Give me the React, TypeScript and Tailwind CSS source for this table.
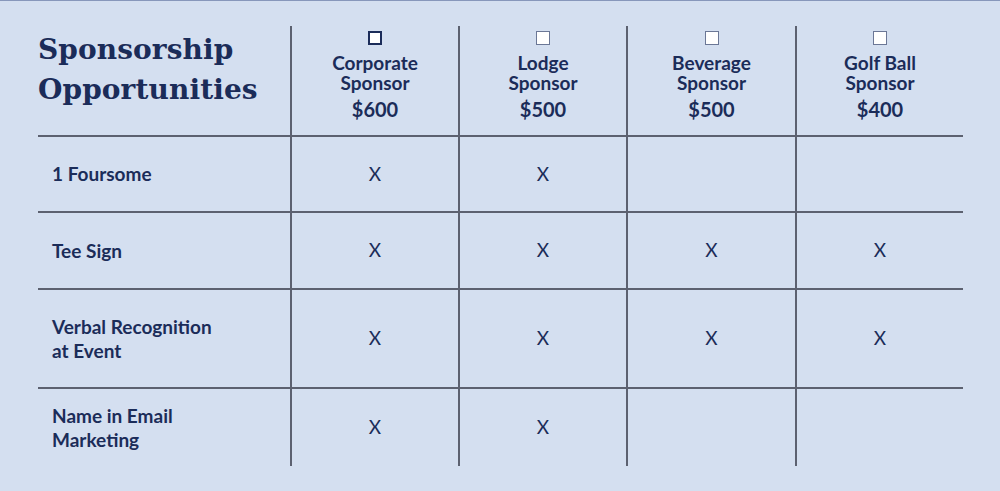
import React from "react";

type Plan = { name: string[]; price: string; checked?: boolean };

const plans: Plan[] = [
  { name: ["Corporate", "Sponsor"], price: "$600", checked: true },
  { name: ["Lodge", "Sponsor"], price: "$500" },
  { name: ["Beverage", "Sponsor"], price: "$500" },
  { name: ["Golf Ball", "Sponsor"], price: "$400" },
];

// which plans include each benefit
const benefits = [
  { label: ["1 Foursome"], has: [true, true, false, false], h: "h-[76px]" },
  { label: ["Tee Sign"], has: [true, true, true, true], h: "h-[77px]" },
  { label: ["Verbal Recognition", "at Event"], has: [true, true, true, true], h: "h-[99px]" },
  { label: ["Name in Email", "Marketing"], has: [true, true, false, false], h: "h-[77px]" },
];

const gridCols = "grid grid-cols-[252px_168px_168px_169px_168px]";

export default function App() {
  return (
    <div
      className="w-[1000px] h-[491px] bg-[#d4dff0] border-t border-[#8797bb] text-[#1b2c59] overflow-hidden"
      style={{ fontFamily: "Lato, 'Liberation Sans', sans-serif" }}
    >
      <div className="ml-[38px] mt-[25px] w-[925px]">
        {/* header */}
        <div className={`${gridCols} h-[111px] border-b-2 border-[#5c6170]`}>
          <div className="pt-[4px]">
            <h1
              className="text-[28px] leading-[40px] font-bold tracking-[0.1px]"
              style={{ fontFamily: "'DejaVu Serif', 'Liberation Serif', serif" }}
            >
              Sponsorship
              <br />
              Opportunities
            </h1>
          </div>
          {plans.map((p) => (
            <div
              key={p.price + p.name[0]}
              className="border-l-2 border-[#5c6170] flex flex-col items-center pt-[5px]"
            >
              <div
                className={
                  p.checked
                    ? "w-[14px] h-[14px] bg-white border-2 border-[#1b2c59]"
                    : "w-[14px] h-[14px] bg-white border border-[#6b7796]"
                }
              />
              <div className="mt-[8px] text-[19px] leading-[20px] font-bold text-center">
                {p.name[0]}
                <br />
                {p.name[1]}
              </div>
              <div className="mt-[6px] text-[20px] leading-[20px] font-bold">{p.price}</div>
            </div>
          ))}
        </div>

        {/* benefit rows */}
        {benefits.map((b, i) => (
          <div
            key={b.label[0]}
            className={`${gridCols} ${b.h} ${i < benefits.length - 1 ? "border-b-2 border-[#5c6170]" : ""}`}
          >
            <div className="flex items-center pl-[14px] text-[19px] leading-[24px] font-bold">
              <div>
                {b.label.map((l) => (
                  <div key={l}>{l}</div>
                ))}
              </div>
            </div>
            {b.has.map((x, j) => (
              <div
                key={j}
                className="border-l-2 border-[#5c6170] flex items-center justify-center text-[19px]"
              >
                {x ? "X" : ""}
              </div>
            ))}
          </div>
        ))}
      </div>
    </div>
  );
}
